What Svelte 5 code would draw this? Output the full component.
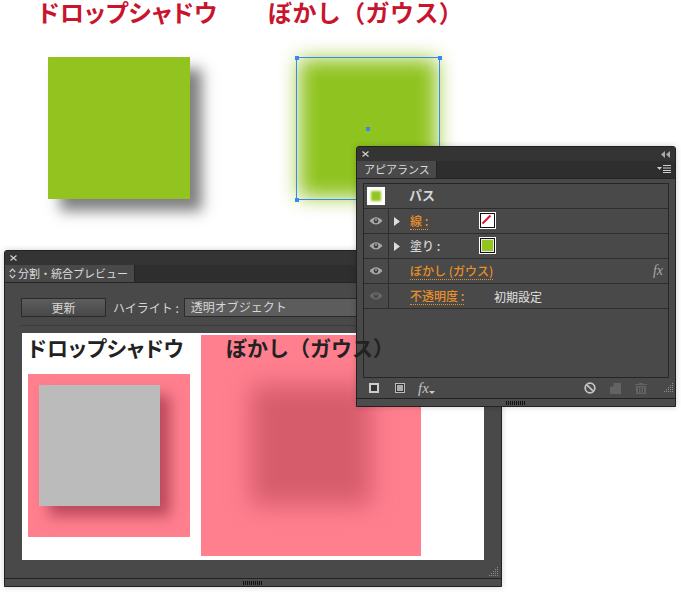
<script>
	const rows = [
		{ label: '線 :', link: true, arrow: true, swatch: 'none' },
		{ label: '塗り :', link: false, arrow: true, swatch: 'green' },
		{ label: 'ぼかし (ガウス)', link: true, fx: true },
		{ label: '不透明度 :', link: true, dim: true, value: '初期設定' }
	]

	// dots of the resize corner, a stair of 2px steps
	const dots = []
	for (let y = 0; y < 5; y++) {
		for (let x = 4 - y; x < 5; x++) dots.push([x * 2, y * 2])
	}
</script>

{#snippet eye(dim)}
	<svg class="eye" class:dim width="14" height="10" viewBox="0 0 14 10">
		<path d="M.5 5 Q7 -2.500 13.500 5 Q7 12 .5 5Z" fill="#a8a8a8" />
		<circle cx="7" cy="4.800" r="2.400" fill="#3e3e3e" />
		<circle cx="7" cy="4" r="0.900" fill="#a8a8a8" />
	</svg>
{/snippet}

{#snippet grip()}
	<div class="grip"></div>
{/snippet}

{#snippet corner()}
	<svg class="corner" width="10" height="10" viewBox="0 0 10 10">
		{#each dots as [x, y]}
			<rect {x} {y} width="1" height="1" fill="#8c8c8c" />
		{/each}
	</svg>
{/snippet}

{#snippet closeIcon()}
	<svg width="7" height="6" viewBox="0 0 7 6"><path d="M.5 .5 6.500 5.500M6.500 .5 .5 5.500" stroke="#ccc" stroke-width="1.300" /></svg>
{/snippet}

<div class="canvas">
	<h2 class="title t1">ドロップシャドウ</h2>
	<h2 class="title t2">ぼかし（ガウス）</h2>

	<div class="shadow-square"></div>
	<div class="blur-square"></div>
	<div class="selection">
		<i class="h tl"></i><i class="h tr"></i><i class="h bl"></i><i class="h br"></i><i class="h mid"></i>
	</div>

	<section class="panel flatten">
		<header class="bar">{@render closeIcon()}</header>
		<div class="tabs">
			<div class="tab">
				<svg width="7" height="11" viewBox="0 0 7 11"><path d="M.8 4 3.500 1.200 6.200 4M.8 7 3.500 9.800 6.200 7" fill="none" stroke="#ccc" stroke-width="1.200" /></svg>
				分割・統合プレビュー
			</div>
		</div>
		<div class="toolbar">
			<button>更新</button>
			<span class="hl">ハイライト :</span>
			<div class="select">透明オブジェクト</div>
		</div>
		<div class="preview">
			<h3 class="ptitle p1">ドロップシャドウ</h3>
			<h3 class="ptitle p2">ぼかし（ガウス）</h3>
			<div class="pink left"><div class="gray"></div></div>
			<div class="pink right"><div class="rose"></div></div>
		</div>
		<div class="spacer">{@render corner()}</div>
		<footer class="foot">{@render grip()}</footer>
	</section>

	<section class="panel appearance">
		<header class="bar">
			{@render closeIcon()}
			<svg width="9" height="7" viewBox="0 0 9 7"><path d="M4 0v7L0 3.500ZM9 0v7L5 3.500Z" fill="#aaa" /></svg>
		</header>
		<div class="tabs">
			<div class="tab">アピアランス</div>
			<svg class="menu" width="15" height="8" viewBox="0 0 15 8"><path d="M0 2h5L2.500 5Z" fill="#ccc" /><path d="M6 .5h8M6 3h8M6 5.500h8M6 7.500h8" stroke="#ccc" /></svg>
		</div>
		<div class="list">
			<div class="row head">
				<div class="thumb"><div></div></div>
				<strong>パス</strong>
			</div>
			{#each rows as r}
				<div class="row">
					<div class="eyecell">{@render eye(r.dim)}</div>
					<div class="arrow">{#if r.arrow}<svg width="6" height="9" viewBox="0 0 6 9"><path d="M0 0 6 4.500 0 9Z" fill="#ddd" /></svg>{/if}</div>
					<span class="label" class:link={r.link}>{r.label}</span>
					{#if r.swatch === 'none'}
						<div class="swatch"><div class="fill none"><svg width="11" height="11" viewBox="0 0 11 11"><path d="M1.500 9.500 9.500 1.500" stroke="#d8142c" stroke-width="2" /></svg></div></div>
					{:else if r.swatch === 'green'}
						<div class="swatch"><div class="fill"></div></div>
					{/if}
					{#if r.value}<span class="value">{r.value}</span>{/if}
					{#if r.fx}<em class="fx">fx</em>{/if}
				</div>
			{/each}
		</div>
		<div class="tools">
			<svg width="10" height="10" viewBox="0 0 10 10"><rect x="1" y="1" width="8" height="8" fill="#333" stroke="#ccc" stroke-width="2" /></svg>
			<svg class="second" width="10" height="10" viewBox="0 0 10 10"><rect width="10" height="10" fill="#bbb" /><rect x="1" y="1" width="8" height="8" fill="#333" /><rect x="2" y="2" width="6" height="6" fill="#aaa" /></svg>
			<span class="fxb"><em>fx</em><svg width="6" height="3" viewBox="0 0 6 3"><path d="M0 0h6L3 3Z" fill="#ccc" /></svg></span>
			<svg class="no" width="12" height="12" viewBox="0 0 12 12"><circle cx="6" cy="6" r="4.800" fill="none" stroke="#c4c4c4" stroke-width="1.800" /><path d="M2.800 2.800 9.200 9.200" stroke="#c4c4c4" stroke-width="1.800" /></svg>
			<svg width="11" height="11" viewBox="0 0 11 11"><path d="M3.500 0H11V11H0V3.500H3.500Z" fill="#636363" /></svg>
			<svg class="trash" width="12" height="12" viewBox="0 0 12 12"><path d="M4 1h4v1h4v1H0V2h4ZM1 4h10v8H1Z" fill="#636363" /><path d="M3.500 5v6M6 5v6M8.500 5v6" stroke="#484848" /></svg>
			{@render corner()}
		</div>
		<footer class="foot">{@render grip()}</footer>
	</section>
</div>

<style>
	:global(body) {
		margin: 0;
		background: #fff;
	}

	.canvas {
		position: relative;
		width: 681px;
		height: 592px;
		overflow: hidden;
		font-family: 'Noto Sans CJK JP', 'Liberation Sans', sans-serif;
	}

	.title {
		position: absolute;
		top: 0;
		margin: 0;
		color: #c8142c;
		font-size: 24px;
		line-height: 24px;
		font-weight: 700;
		white-space: nowrap;
	}
	.t1 {
		left: 38px;
		font-feature-settings: 'palt';
		letter-spacing: 0.6px;
	}
	.t2 {
		left: 268px;
		letter-spacing: 0.4px;
	}

	.shadow-square {
		position: absolute;
		left: 48px;
		top: 57px;
		width: 142px;
		height: 142px;
		background: #92c31f;
		box-shadow: 12px 12px 13px rgba(50, 50, 50, 0.62);
	}

	.blur-square {
		position: absolute;
		left: 299px;
		top: 59px;
		width: 138px;
		height: 138px;
		background: #8fc31f;
		filter: blur(10px);
	}

	.selection {
		position: absolute;
		left: 296px;
		top: 57px;
		width: 142px;
		height: 141px;
		border: 1px solid #3c86f0;
	}
	.h {
		position: absolute;
		width: 4px;
		height: 4px;
		background: #3c86f0;
	}
	.tl { left: -2px; top: -2px; }
	.tr { right: -3px; top: -2px; }
	.bl { left: -2px; bottom: -3px; }
	.br { right: -3px; bottom: -3px; }
	.mid { left: 69px; top: 69px; }

	.panel {
		position: absolute;
		box-sizing: border-box;
		display: flex;
		flex-direction: column;
		background: #494949;
		border: 1px solid #222;
		border-radius: 3px 3px 0 0;
		box-shadow: 0 0 6px rgba(0, 0, 0, 0.18);
		color: #d6d6d6;
	}
	.flatten {
		left: 4px;
		top: 250px;
		width: 498px;
		height: 337px;
	}
	.appearance {
		left: 356px;
		top: 146px;
		width: 320px;
		height: 261px;
	}

	.bar {
		height: 14px;
		flex: none;
		display: flex;
		align-items: center;
		justify-content: space-between;
		padding: 0 5px;
		background: #343434;
		border-radius: 2px 2px 0 0;
	}

	.tabs {
		height: 17px;
		flex: none;
		display: flex;
		align-items: flex-end;
		justify-content: space-between;
		background: #2e2e2e;
		border-bottom: 1px solid #252525;
	}
	.tab {
		height: 17px;
		display: flex;
		align-items: center;
		gap: 2px;
		padding: 0 6px 0 4px;
		background: #494949;
		border-right: 1px solid #252525;
		font-size: 11px;
		line-height: 17px;
		white-space: nowrap;
		color: #dcdcdc;
	}
	.appearance .tab {
		padding: 0 6px 0 7px;
	}
	.menu {
		margin: 0 3px 5px 0;
	}

	.toolbar {
		display: flex;
		align-items: center;
		height: 19px;
		margin: 15px 16px 0;
		padding-bottom: 8px;
		border-bottom: 1px solid #3c3c3c;
		font-size: 12px;
	}
	button {
		width: 85px;
		height: 19px;
		padding: 0;
		border: 1px solid #2a2a2a;
		background: linear-gradient(#5d5d5d, #484848);
		color: #d8d8d8;
		font: inherit;
		line-height: 17px;
	}
	.hl {
		margin-left: 7px;
		white-space: nowrap;
	}
	.select {
		flex: 1;
		height: 19px;
		box-sizing: border-box;
		margin-left: 5px;
		padding-left: 6px;
		border: 1px solid #2a2a2a;
		background: #5c5c5c;
		line-height: 16px;
	}

	.preview {
		position: relative;
		flex: none;
		height: 227px;
		margin: 7px 17px 0;
		background: #fff;
	}
	.ptitle {
		position: absolute;
		top: -1px;
		z-index: 1;
		margin: 0;
		color: #222;
		font-size: 21px;
		line-height: 30px;
		font-weight: 700;
		white-space: nowrap;
	}
	.p1 {
		left: 6px;
		font-feature-settings: 'palt';
		letter-spacing: 0.4px;
	}
	.p2 {
		left: 204px;
	}

	.pink {
		position: absolute;
		background: #ff7f8f;
	}
	.left {
		left: 6px;
		top: 41px;
		width: 162px;
		height: 163px;
	}
	.gray {
		width: 121px;
		height: 121px;
		margin: 11px 0 0 11px;
		background: #bbb;
		box-shadow: 10px 10px 13px rgba(130, 30, 50, 0.55);
	}
	.right {
		left: 179px;
		top: 2px;
		width: 220px;
		height: 221px;
		overflow: hidden;
	}
	.rose {
		width: 120px;
		height: 120px;
		margin: 50px 0 0 50px;
		background: #d65c6c;
		filter: blur(12px);
	}

	.spacer {
		flex: 1;
		display: flex;
		justify-content: flex-end;
		align-items: flex-end;
		padding: 0 2px 1px 0;
	}
	.foot {
		height: 7px;
		flex: none;
		display: flex;
		justify-content: center;
		align-items: center;
		background: #4c4c4c;
		border-top: 1px solid #222;
	}
	.grip {
		width: 20px;
		height: 4px;
		background: repeating-linear-gradient(90deg, #111 0 1px, transparent 1px 2px);
	}

	.list {
		flex: 1;
		margin: 4px 6px 0;
		border: 1px solid #262626;
		font-size: 12px;
	}
	.row {
		display: flex;
		align-items: center;
		height: 25px;
		border-bottom: 1px solid #2e2e2e;
		box-sizing: border-box;
		position: relative;
	}
	.thumb {
		box-sizing: border-box;
		width: 18px;
		height: 18px;
		margin-left: 3px;
		padding: 4px;
		background: #fff;
	}
	.thumb div {
		width: 10px;
		height: 10px;
		background: #93c41f;
		filter: blur(1px);
	}
	.head strong {
		margin-left: 24px;
		font-size: 13px;
		line-height: 20px;
		margin-top: -2px;
		font-weight: 700;
	}
	.eyecell {
		box-sizing: border-box;
		flex: none;
		width: 25px;
		height: 100%;
		display: flex;
		align-items: center;
		justify-content: center;
		border-right: 1px solid #2e2e2e;
	}
	.eye.dim {
		opacity: 0.35;
	}
	.arrow {
		flex: none;
		width: 21px;
		display: flex;
		padding-left: 5px;
		box-sizing: border-box;
	}
	.label {
		white-space: nowrap;
		line-height: 16px;
		font-weight: 500;
	}
	.link {
		color: #ea8f25;
		border-bottom: 1px dotted #ea8f25;
	}
	.swatch {
		position: absolute;
		left: 115px;
		top: 3px;
		box-sizing: border-box;
		width: 17px;
		height: 17px;
		padding: 1px;
		background: #fff;
	}
	.fill {
		box-sizing: border-box;
		width: 15px;
		height: 15px;
		border: 1px solid #111;
		outline: 1px solid #e8e8e8;
		outline-offset: -2px;
		background: #93c41f;
	}
	.fill.none {
		outline: none;
		background: #fff;
		padding: 1px 0 0 1px;
	}
	.fill.none svg {
		display: block;
		margin: -1px;
	}
	.value {
		position: absolute;
		left: 130px;
		color: #e0e0e0;
	}
	.fx {
		position: absolute;
		right: 5px;
		color: #a8a8a8;
		font: italic 14px 'Liberation Serif', serif;
	}

	.tools {
		flex: none;
		display: flex;
		align-items: center;
		height: 20px;
		padding: 0 1px 0 12px;
		gap: 14px;
	}
	.second {
		margin-left: 2px;
	}
	.fxb {
		display: flex;
		align-items: flex-end;
		margin-left: -1px;
	}
	.fxb em {
		color: #c4c4c4;
		font: italic 15px/15px 'Liberation Serif', serif;
	}
	.fxb svg {
		margin-bottom: 2px;
	}
	.no {
		margin-left: auto;
	}
	.trash {
		margin-right: 3px;
	}
</style>
